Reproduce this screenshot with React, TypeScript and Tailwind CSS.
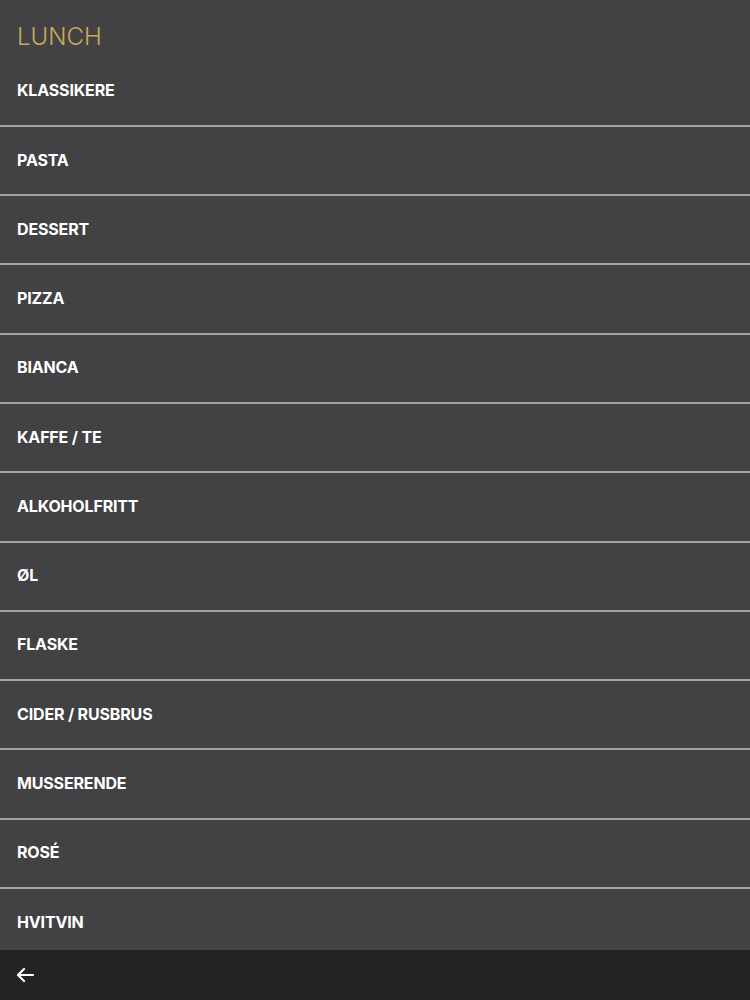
const CATEGORIES = [
  "KLASSIKERE",
  "PASTA",
  "DESSERT",
  "PIZZA",
  "BIANCA",
  "KAFFE / TE",
  "ALKOHOLFRITT",
  "ØL",
  "FLASKE",
  "CIDER / RUSBRUS",
  "MUSSERENDE",
  "ROSÉ",
  "HVITVIN",
];

function BackArrow() {
  return (
    <svg width="18" height="16" viewBox="0 0 18 16" fill="none"
      stroke="currentColor" strokeWidth="2.2" strokeLinecap="round" strokeLinejoin="round">
      <path d="M2 8h15M8 2 2 8l6 6" />
    </svg>
  );
}

export default function App() {
  return (
    <div
      className="h-screen flex flex-col bg-[#424143] text-white"
      style={{ fontFamily: "Inter, 'Noto Sans', sans-serif" }}
    >
      <div className="flex-1 overflow-hidden">
        {/* Section title */}
        <div className="h-[57.7px] px-[17px] pt-[23px]">
          <h1 className="text-[24px] leading-[28px] font-light text-[#c9a95a]">LUNCH</h1>
        </div>

        {/* Category rows */}
        <ul>
          {CATEGORIES.map((c) => (
            <li
              key={c}
              className="h-[69.27px] flex items-center px-[17px] pb-[2px] border-b-2 border-[#a3a3a3]"
            >
              <span className="text-[16px] font-bold tracking-[-0.01em]">{c}</span>
            </li>
          ))}
        </ul>
      </div>

      {/* Bottom bar */}
      <nav className="h-[50px] flex-shrink-0 flex items-center px-[16px] bg-[#242225]">
        <BackArrow />
      </nav>
    </div>
  );
}
